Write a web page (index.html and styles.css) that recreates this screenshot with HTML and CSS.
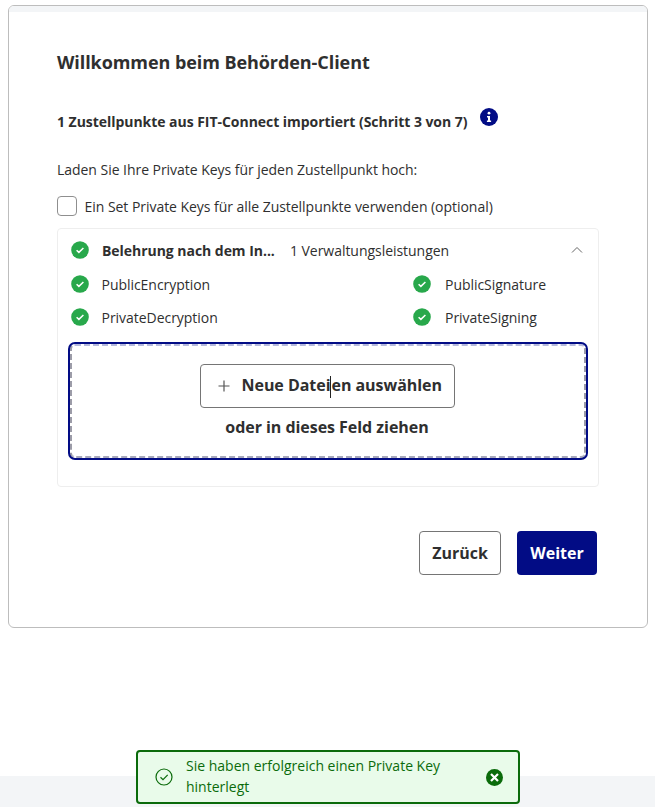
FILE: index.html
```html
<!DOCTYPE html>
<html lang="de">

<head>
    <meta charset="UTF-8">
    <meta name="viewport" content="width=device-width, initial-scale=1.0">
    <title>Behörden-Client</title>
    <link rel="stylesheet" href="styles.css">
</head>

<body>
    <main class="card">
        <div class="card-strip"></div>
        <div class="card-body">
            <h1 class="title">Willkommen beim Behörden-Client</h1>

            <div class="step">
                <h2 class="step-title">1 Zustellpunkte aus FIT-Connect importiert (Schritt 3 von 7)</h2>
                <svg class="info-icon" viewBox="0 0 18 18">
                    <circle cx="9" cy="9" r="9" fill="#020c85" />
                    <circle cx="9" cy="5.2" r="1.4" fill="#fff" />
                    <path d="M7 8h3v4.6h1.1V14H6.9v-1.4H8V9.400H7z" fill="#fff" />
                </svg>
            </div>

            <p class="intro">Laden Sie Ihre Private Keys für jeden Zustellpunkt hoch:</p>

            <label class="check-row">
                <span class="checkbox"></span>
                Ein Set Private Keys für alle Zustellpunkte verwenden (optional)
            </label>

            <section class="accordion">
                <div class="accordion-head">
                    <svg class="ok-icon" viewBox="0 0 18 18">
                        <circle cx="9" cy="9" r="8.8" fill="#28a84b" />
                        <path d="M5.600 9.200l2.300 2.200 4.500-4.400" fill="none" stroke="#fff" stroke-width="1.500" />
                    </svg>
                    <strong class="accordion-name">Belehrung nach dem In...</strong>
                    <span class="accordion-count">1 Verwaltungsleistungen</span>
                    <svg class="chevron" viewBox="0 0 12 8">
                        <path d="M1 6.500l5-5 5 5" fill="none" stroke="#666" stroke-width="1" />
                    </svg>
                </div>

                <ul class="key-list">
                    <li class="key-item">
                        <svg class="ok-icon" viewBox="0 0 18 18">
                            <circle cx="9" cy="9" r="8.8" fill="#28a84b" />
                            <path d="M5.600 9.200l2.300 2.200 4.500-4.400" fill="none" stroke="#fff" stroke-width="1.500" />
                        </svg>
                        PublicEncryption
                    </li>
                    <li class="key-item">
                        <svg class="ok-icon" viewBox="0 0 18 18">
                            <circle cx="9" cy="9" r="8.8" fill="#28a84b" />
                            <path d="M5.600 9.200l2.300 2.200 4.500-4.400" fill="none" stroke="#fff" stroke-width="1.500" />
                        </svg>
                        PublicSignature
                    </li>
                    <li class="key-item">
                        <svg class="ok-icon" viewBox="0 0 18 18">
                            <circle cx="9" cy="9" r="8.8" fill="#28a84b" />
                            <path d="M5.600 9.200l2.300 2.200 4.500-4.400" fill="none" stroke="#fff" stroke-width="1.500" />
                        </svg>
                        PrivateDecryption
                    </li>
                    <li class="key-item">
                        <svg class="ok-icon" viewBox="0 0 18 18">
                            <circle cx="9" cy="9" r="8.8" fill="#28a84b" />
                            <path d="M5.600 9.200l2.300 2.200 4.500-4.400" fill="none" stroke="#fff" stroke-width="1.500" />
                        </svg>
                        PrivateSigning
                    </li>
                </ul>

                <div class="dropzone">
                    <button class="file-button" type="button">
                        <svg class="plus-icon" viewBox="0 0 12 12">
                            <path d="M6 .5v11M.5 6h11" fill="none" stroke="#555" stroke-width="1.200" />
                        </svg>
                        <span>Neue Datei<i class="caret"></i>en auswählen</span>
                    </button>
                    <p class="drop-hint">oder in dieses Feld ziehen</p>
                </div>
            </section>

            <div class="actions">
                <button class="btn btn-back" type="button">Zurück</button>
                <button class="btn btn-next" type="button">Weiter</button>
            </div>
        </div>
    </main>

    <footer class="page-footer"></footer>

    <div class="toast">
        <svg class="toast-icon" viewBox="0 0 18 18">
            <circle cx="9" cy="9" r="8" fill="none" stroke="#0b6b0b" stroke-width="1.200" />
            <path d="M5.500 9.300l2.500 2.400 4.700-4.900" fill="none" stroke="#0b6b0b" stroke-width="1.200" />
        </svg>
        <span class="toast-text">Sie haben erfolgreich einen Private Key hinterlegt</span>
        <svg class="toast-close" viewBox="0 0 17 17">
            <circle cx="8.500" cy="8.500" r="8.500" fill="#0b6b0b" />
            <path d="M5 5l7 7M12 5l-7 7" fill="none" stroke="#fff" stroke-width="2.200" />
        </svg>
    </div>
</body>

</html>
```

FILE: styles.css
```css
* {
    box-sizing: border-box;
}

body {
    margin: 0;
    min-height: 807px;
    height: 807px;
    overflow: hidden;
    position: relative;
    display: flex;
    flex-direction: column;
    background-color: #fff;
    color: #2f2f2f;
    font-family: "Open Sans", sans-serif;
    font-size: 14px;
    letter-spacing: -0.04px;
}

.card {
    margin: 5px 7px 0 8px;
    height: 623px;
    border: 1px solid #bdbdbd;
    border-radius: 6px;
    overflow: hidden;
}

.card-strip {
    height: 6px;
    background-color: #f3f5f7;
}

.card-body {
    padding: 0 48px;
}

.title {
    margin: 37px 0 0;
    font-size: 18px;
    line-height: 26px;
    font-weight: 700;
    letter-spacing: -0.07px;
}

.step {
    margin-top: 33px;
    display: flex;
    align-items: flex-start;
}

.step-title {
    margin: 4px 0 0;
    font-size: 14px;
    line-height: 20px;
    font-weight: 700;
}

.info-icon {
    margin-left: 13px;
    width: 18px;
    height: 18px;
}

.intro {
    margin: 28px 0 0;
    line-height: 20px;
}

.check-row {
    margin-top: 16px;
    display: flex;
    align-items: center;
    gap: 7.500px;
    height: 20px;
}

.checkbox {
    width: 20px;
    height: 20px;
    border: 1px solid #8f8f8f;
    border-radius: 4px;
    background-color: #fff;
}

.accordion {
    margin-top: 12px;
    height: 259px;
    border: 1px solid #eeeeee;
    border-radius: 4px;
    padding: 0 10px;
}

.accordion-head {
    height: 42px;
    padding: 0 5px 0 3px;
    display: flex;
    align-items: center;
}

.ok-icon {
    flex: none;
    width: 18px;
    height: 18px;
}

.accordion-name {
    margin-left: 13px;
    width: 188px;
    font-weight: 700;
}

.accordion-count {
    flex: 1;
}

.chevron {
    width: 12px;
    height: 8px;
}

.key-list {
    margin: 3px 0 0;
    padding: 0 0 0 3px;
    list-style: none;
    display: grid;
    grid-template-columns: 342px 1fr;
    row-gap: 13px;
}

.key-item {
    display: flex;
    align-items: center;
    gap: 12.500px;
    height: 20px;
}

.key-item:nth-child(even) {
    gap: 14px;
}

.dropzone {
    margin: 16px 1px 0;
    height: 116px;
    border: 3px dashed #9c9ca8;
    border-top-color: #b5b9dc;
    border-bottom-color: #a8a9bc;
    outline: 2px solid #020c85;
    outline-offset: -1px;
    border-radius: 6px;
    padding-top: 18px;
    display: flex;
    flex-direction: column;
    align-items: center;
}

.file-button {
    margin-right: 2px;
    width: 255px;
    height: 44px;
    padding: 0 0 0 17px;
    border: 1px solid #757575;
    border-radius: 4px;
    background-color: #fff;
    color: #2f2f2f;
    font-family: inherit;
    font-size: 16px;
    font-weight: 700;
    letter-spacing: inherit;
    display: flex;
    align-items: center;
    gap: 12px;
}

.plus-icon {
    width: 12px;
    height: 12px;
}

.caret {
    display: inline-block;
    width: 0;
    height: 22px;
    border-left: 1px solid #222;
    vertical-align: middle;
}

.drop-hint {
    margin: 8px 2px 0 0;
    font-size: 16px;
    line-height: 22px;
    font-weight: 700;
}

.actions {
    margin-top: 44px;
    padding-right: 2px;
    display: flex;
    justify-content: flex-end;
    gap: 16px;
}

.btn {
    height: 44px;
    border-radius: 4px;
    font-family: inherit;
    font-size: 16px;
    font-weight: 700;
}

.btn-back {
    width: 82px;
    border: 1px solid #757575;
    background-color: #fff;
    color: #2f2f2f;
}

.btn-next {
    width: 80px;
    border: 0;
    background-color: #020c85;
    color: #fff;
}

.page-footer {
    margin-top: auto;
    height: 31px;
    background-color: #f3f5f7;
}

.toast {
    position: absolute;
    left: 136px;
    bottom: 3px;
    width: 384px;
    height: 54px;
    padding: 0 15px 0 17px;
    border: 2px solid #0b6b0b;
    border-radius: 4px;
    background-color: #e9fbea;
    color: #0b6b0b;
    letter-spacing: 0;
    display: flex;
    align-items: center;
}

.toast-icon {
    flex: none;
    width: 18px;
    height: 18px;
}

.toast-text {
    margin-left: 13px;
    padding-bottom: 2px;
    flex: 1;
    line-height: 21px;
}

.toast-close {
    flex: none;
    width: 17px;
    height: 17px;
}
```
